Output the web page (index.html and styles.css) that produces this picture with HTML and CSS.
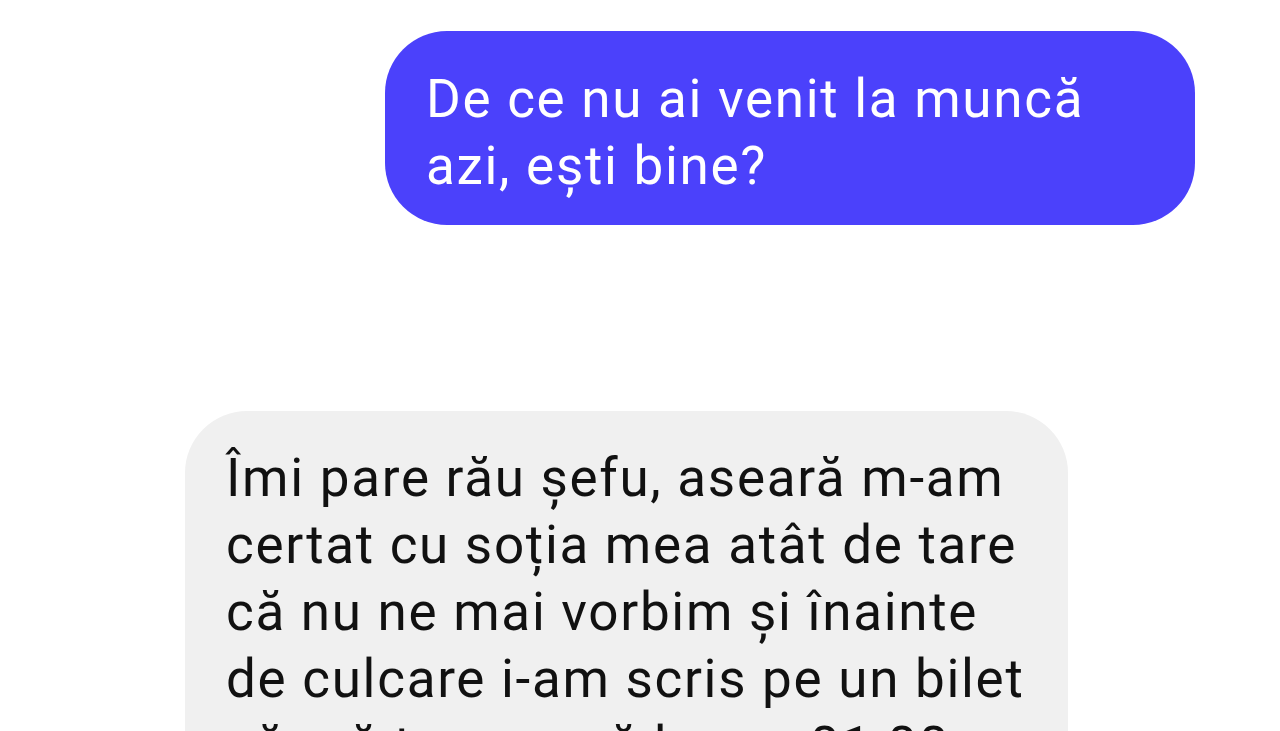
FILE: index.html
```html
<!DOCTYPE html>
<html lang="ro">
<head>
<meta charset="utf-8">
<title>Chat</title>
<link rel="stylesheet" href="styles.css">
</head>
<body>
<main class="chat">
  <div class="bubble bubble-out">De ce nu ai venit la muncă azi, ești bine?</div>
  <div class="bubble bubble-in">Îmi pare rău șefu, aseară m-am certat cu soția mea atât de tare că nu ne mai vorbim și înainte de culcare i-am scris pe un bilet să mă trezească la ora 01:00</div>
</main>
</body>
</html>
```

FILE: styles.css
```css
html, body {
  margin: 0;
  padding: 0;
  background: #ffffff;
  height: 100%;
  overflow: hidden;
}

.chat {
  display: flex;
  flex-direction: column;
  font-family: Roboto, "Noto Sans", sans-serif;
  font-size: 53px;
  line-height: 67px;
  letter-spacing: 1.7px;
}

.bubble {
  box-sizing: border-box;
  border-radius: 62px;
}

.bubble-out {
  align-self: flex-end;
  margin-top: 31px;
  margin-right: 85px;
  width: 810px;
  padding: 35px 100px 25px 41px;
  background: #4b41fb;
  color: #ffffff;
}

.bubble-in {
  align-self: flex-start;
  margin-top: 186px;
  margin-left: 185px;
  width: 883px;
  padding: 34px 38px 30px 41px;
  background: #f0f0f0;
  color: #111111;
}
```
